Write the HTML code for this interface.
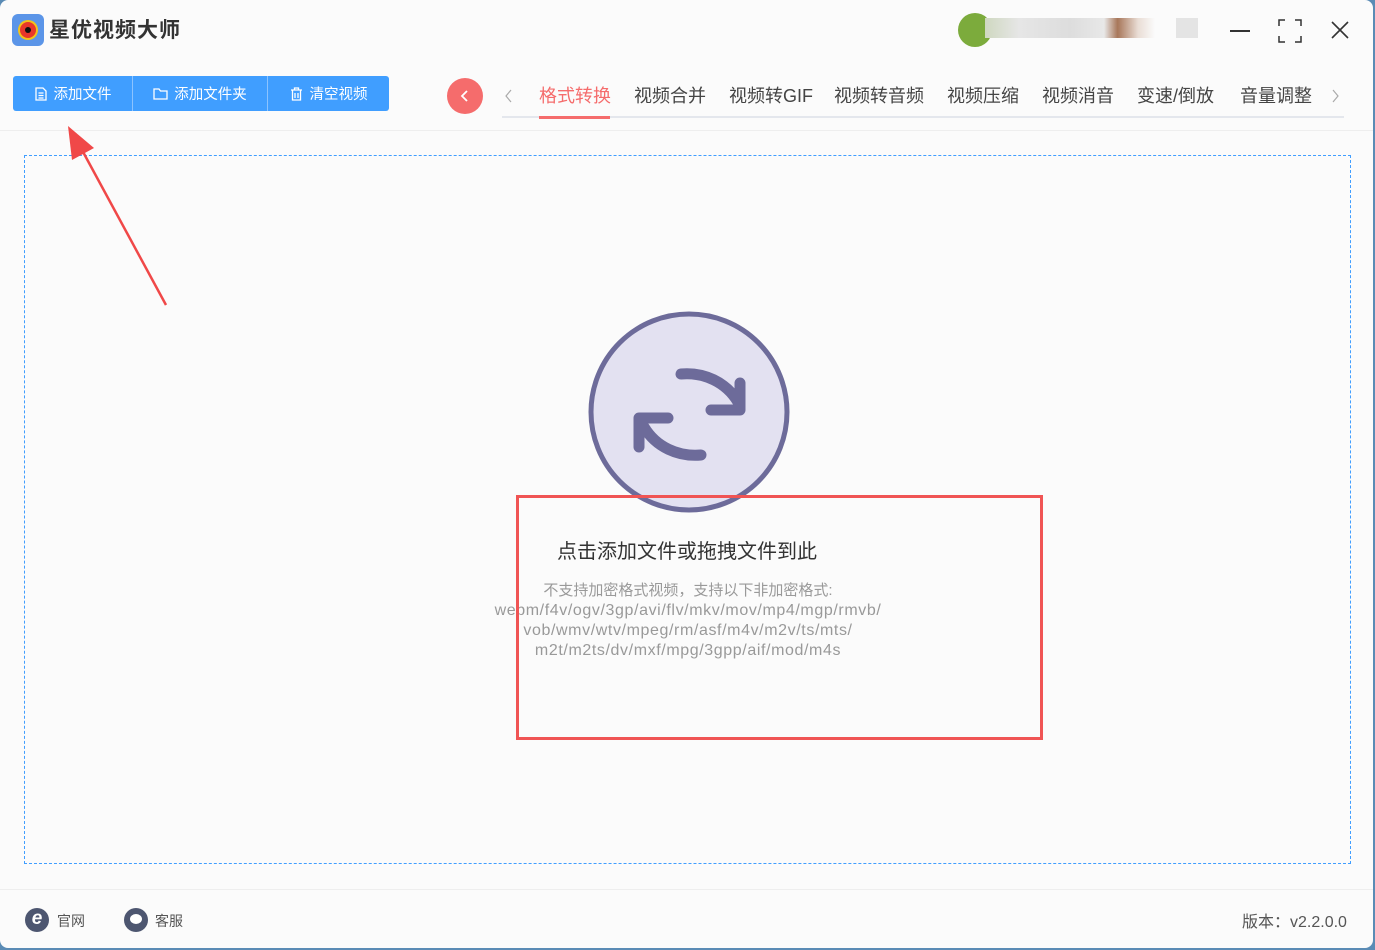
<!DOCTYPE html>
<html><head><meta charset="utf-8"><style>
*{margin:0;padding:0;box-sizing:border-box}
body{width:1375px;height:950px;background:#5a8bb5;font-family:"Liberation Sans","Noto Sans CJK SC",sans-serif;overflow:hidden;position:relative}
.win{position:absolute;left:0;top:0;width:1373px;height:948px;background:#fbfbfb;border-radius:8px}
.abs{position:absolute}
.btns{left:13px;top:76px;width:376px;height:35px;background:#409eff;border-radius:3px;display:flex;color:#fff;font-size:14.5px}
.btns div{display:flex;align-items:center;justify-content:center;height:100%;border-right:1px solid #8cc3ff}
.btns div:last-child{border-right:none}
.tab{top:82px;font-size:18px;color:#444;white-space:nowrap}
</style></head><body>
<div class="win">
<div class="abs" style="left:12px;top:14px;width:32px;height:32px;border-radius:6px;background:#5b95e8"></div>
<div class="abs" style="left:18px;top:20px;width:20px;height:20px;border-radius:50%;background:#f3c21a"></div>
<div class="abs" style="left:20px;top:22px;width:16px;height:16px;border-radius:50%;background:#e8372a"></div>
<div class="abs" style="left:25px;top:27px;width:6px;height:6px;border-radius:50%;background:#111"></div>
<div class="abs" style="left:49px;top:14px;font-size:21px;font-weight:bold;color:#333;letter-spacing:1px">星优视频大师</div>
<div class="abs" style="left:958px;top:13px;width:34px;height:34px;border-radius:50%;background:#7cab3c"></div>
<div class="abs" style="left:985px;top:18px;width:170px;height:20px;background:linear-gradient(90deg,#cfd8c0,#e6e6e6 20%,#ddd 50%,#e8e8e8 70%,#a8775a 78%,#e9ddd5 90%,#fbfbfb)"></div>
<div class="abs" style="left:1176px;top:18px;width:22px;height:20px;background:#e4e4e4"></div>
<div class="abs" style="left:1230px;top:30px;width:20px;height:1.5px;background:#333"></div>
<svg class="abs" style="left:1278px;top:19px" width="24" height="24" fill="none" stroke="#333" stroke-width="1.5"><path d="M1 7V1h6M17 1h6v6M23 17v6h-6M7 23H1v-6"/></svg>
<svg class="abs" style="left:1331px;top:21px" width="18" height="18" stroke="#333" stroke-width="1.6"><path d="M1 1L17 17M17 1L1 17"/></svg>
<div class="abs btns">
<div style="width:120px"><svg width="14" height="14" fill="none" stroke="#fff" stroke-width="1.3" style="margin-right:6px"><path d="M2 1h7l3 3v9H2z M4.5 6h5M4.5 8.5h5M4.5 11h5"/></svg>添加文件</div>
<div style="width:135px"><svg width="15" height="13" fill="none" stroke="#fff" stroke-width="1.3" style="margin-right:6px"><path d="M1 2h5l1.5 2H14v8H1z"/></svg>添加文件夹</div>
<div style="width:121px"><svg width="13" height="14" fill="none" stroke="#fff" stroke-width="1.3" style="margin-right:7px"><path d="M1 3h11M4.5 3V1h4v2M2.5 3v10h8V3M5 6v5M8 6v5"/></svg>清空视频</div>
</div>
<div class="abs" style="left:447px;top:78px;width:36px;height:36px;border-radius:50%;background:#f56c6c"></div>
<svg class="abs" style="left:460px;top:90px" width="10" height="12" fill="none" stroke="#fff" stroke-width="1.8"><path d="M7 1L2 6l5 5"/></svg>
<svg class="abs" style="left:504px;top:89px" width="10" height="14" fill="none" stroke="#aaa" stroke-width="1.2"><path d="M7 1L2 7l5 6"/></svg>
<svg class="abs" style="left:1331px;top:89px" width="10" height="14" fill="none" stroke="#aaa" stroke-width="1.2"><path d="M2 1l5 6-5 6"/></svg>
<div class="abs" style="left:502px;top:116px;width:842px;height:2px;background:#e4e7ed"></div>
<div class="abs" style="left:539px;top:116px;width:71px;height:3px;background:#f56c6c"></div>
<div class="abs tab" style="left:539px;color:#f56c6c">格式转换</div>
<div class="abs tab" style="left:634px">视频合并</div>
<div class="abs tab" style="left:729px">视频转GIF</div>
<div class="abs tab" style="left:834px">视频转音频</div>
<div class="abs tab" style="left:947px">视频压缩</div>
<div class="abs tab" style="left:1042px">视频消音</div>
<div class="abs tab" style="left:1137px">变速/倒放</div>
<div class="abs tab" style="left:1240px">音量调整</div>
<div class="abs" style="left:0;top:130px;width:1373px;height:1px;background:#eee"></div>
<div class="abs" style="left:24px;top:155px;width:1327px;height:709px;border:1px dashed #409eff"></div>
<svg class="abs" style="left:586px;top:310px" width="206" height="206"><circle cx="103" cy="102" r="98" fill="#e3e1f1" stroke="#6d6b9a" stroke-width="5"/>
<g fill="none" stroke="#6d6b9a" stroke-width="11" stroke-linecap="round" stroke-linejoin="round"><path d="M95 64C118 62 140 72 152 92M154 73V100H125M115 145C92 147 70 137 58 117M53 137V108H82"/></g></svg>
<div class="abs" style="left:557px;top:535px;font-size:20px;color:#333">点击添加文件或拖拽文件到此</div>
<div class="abs" style="left:400px;top:581px;width:576px;text-align:center;font-size:16px;letter-spacing:0.6px;line-height:20px;color:#999"><span style="font-size:15px;letter-spacing:0">不支持加密格式视频，支持以下非加密格式:</span><br>webm/f4v/ogv/3gp/avi/flv/mkv/mov/mp4/mgp/rmvb/<br>vob/wmv/wtv/mpeg/rm/asf/m4v/m2v/ts/mts/<br>m2t/m2ts/dv/mxf/mpg/3gpp/aif/mod/m4s</div>
<div class="abs" style="left:516px;top:495px;width:527px;height:245px;border:3px solid #f05454"></div>
<svg class="abs" style="left:60px;top:120px" width="110" height="190"><path d="M106 185L22 30" stroke="#f04848" stroke-width="2.5"/><path d="M8 6L34 28 12 40z" fill="#f04848"/></svg>
<div class="abs" style="left:0;top:889px;width:1373px;height:1px;background:#eee"></div>
<div class="abs" style="left:25px;top:908px;width:24px;height:24px;border-radius:50%;background:#4d5670;color:#fff;font-size:19px;font-style:italic;font-weight:bold;text-align:center;line-height:22px">e</div>
<div class="abs" style="left:57px;top:911px;font-size:14px;color:#555">官网</div>
<div class="abs" style="left:124px;top:908px;width:24px;height:24px;border-radius:50%;background:#4d5670"></div>
<div class="abs" style="left:130px;top:914px;width:12px;height:10px;border-radius:50%;background:#fff"></div>
<div class="abs" style="left:155px;top:911px;font-size:14px;color:#555">客服</div>
<div class="abs" style="left:1242px;top:908px;font-size:16px;color:#555">版本：v2.2.0.0</div>
</div>
</body></html>
